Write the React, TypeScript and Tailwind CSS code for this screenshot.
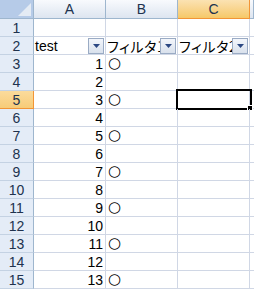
import React from 'react';

const cols = ['A', 'B', 'C', ''];
const rows = Array.from({ length: 15 }, (_, i) => i + 1);

function FilterButton() {
  return (
    <div className="absolute right-[1px] bottom-0 w-[16px] h-[16px] border border-[#9aabc4] bg-gradient-to-b from-[#f3f6fb] to-[#d9e1ec] flex items-center justify-center">
      <svg width="7" height="4" viewBox="0 0 7 4">
        <path d="M0 0 H7 L3.5 4 Z" fill="#2b4782" />
      </svg>
    </div>
  );
}

export default function App() {
  const font = { fontFamily: '"Liberation Sans", "Noto Sans CJK JP", sans-serif' };
  const jp = { fontFamily: '"Noto Sans CJK JP", sans-serif' };

  return (
    <div className="w-[254px] h-[290px] overflow-hidden bg-white text-black" style={font}>
      <div className="grid grid-cols-[34px_72px_72px_72px_1fr]">
        {/* column header row */}
        <div className="relative h-[19px] border-r border-b border-[#9eb6ce] bg-[#b6cbe8]">
          <svg className="absolute right-[2px] bottom-[2px]" width="13" height="13" viewBox="0 0 13 13">
            <path d="M13 0 V13 H0 Z" fill="#e4ebf4" />
          </svg>
        </div>
        {cols.map((c, i) => (
          <div
            key={i}
            className={`h-[19px] flex items-center justify-center text-[14px] border-r border-b ${
              c === 'C'
                ? 'bg-gradient-to-b from-[#fbe2b2] to-[#f6c867] border-[#f29536] text-[#20324e]'
                : 'bg-gradient-to-b from-[#f8fafd] to-[#dde5f0] border-[#9eb6ce] text-[#20324e]'
            }`}
          >
            {c}
          </div>
        ))}

        {rows.map((r) => {
          const selected = r === 5;
          const num = r >= 3 ? r - 2 : null;
          const circle = num !== null && num % 2 === 1;
          return (
            <React.Fragment key={r}>
              <div
                className={`h-[18px] flex items-end justify-center pb-[1px] text-[14px] leading-none border-r border-b ${
                  selected
                    ? 'bg-gradient-to-b from-[#fbdb9c] to-[#f7cc78] border-[#f29536] text-[#20324e]'
                    : 'bg-[#e4ecf7] border-r-[#9eb6ce] border-b-[#c4d2e3] text-[#20324e]'
                }`}
              >
                {r}
              </div>
              {/* A */}
              <div
                className={`relative h-[18px] flex items-end pb-[1px] text-[14px] leading-none border-r border-b border-[#d0d7e5] ${
                  r === 2 ? 'justify-start pl-[1px]' : 'justify-end pr-[2px]'
                }`}
              >
                {r === 2 ? 'test' : num}
                {r === 2 && <FilterButton />}
              </div>
              {/* B */}
              <div className="relative h-[18px] flex items-end pb-[1px] pl-[1px] text-[14px] leading-none border-r border-b border-[#d0d7e5] overflow-hidden whitespace-nowrap">
                {r === 2 && (
                  <span className="[font-feature-settings:'palt'] tracking-[0.6px]" style={jp}>
                    フィルタ1
                  </span>
                )}
                {circle && (
                  <span className="text-[15px] leading-none pl-[1px]" style={{ fontFamily: '"DejaVu Sans", sans-serif' }}>
                    ○
                  </span>
                )}
                {r === 2 && <FilterButton />}
              </div>
              {/* C */}
              <div className="relative h-[18px] flex items-end pb-[1px] pl-[1px] text-[14px] leading-none border-r border-b border-[#d0d7e5] whitespace-nowrap">
                {r === 2 && (
                  <span className="overflow-hidden block w-[70px] [font-feature-settings:'palt'] tracking-[0.6px]" style={jp}>
                    フィルタ2
                  </span>
                )}
                {r === 2 && <FilterButton />}
                {selected && (
                  <div className="absolute -left-[2px] -top-[2px] w-[76px] h-[21px] border-[2px] border-black">
                    <div className="absolute -right-[3px] -bottom-[3px] w-[6px] h-[6px] bg-black border border-white" />
                  </div>
                )}
              </div>
              {/* D */}
              <div className="h-[18px] border-b border-[#d0d7e5]" />
            </React.Fragment>
          );
        })}
      </div>
    </div>
  );
}
